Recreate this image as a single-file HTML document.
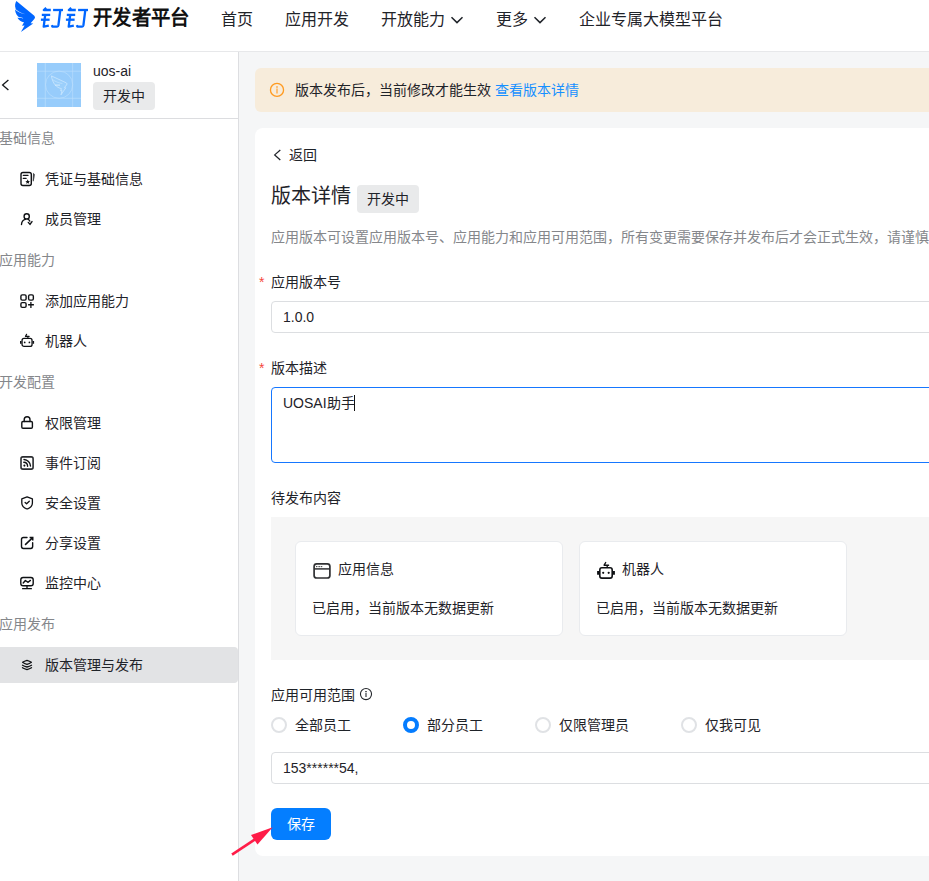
<!DOCTYPE html>
<html lang="zh-CN">
<head>
<meta charset="utf-8">
<title>钉钉开发者平台</title>
<style>
*{box-sizing:border-box;margin:0;padding:0}
html,body{width:929px;height:881px;overflow:hidden;background:#f5f6f7}
body{font-family:"Liberation Sans",sans-serif;font-size:14px;color:#1f2329;position:relative;-webkit-font-smoothing:auto}
.abs{position:absolute}
.t{position:absolute;white-space:nowrap;line-height:20px;height:20px}
/* header */
#hdr{position:absolute;left:0;top:0;width:929px;height:52px;background:#fff;border-bottom:1px solid #e7e8ea}
#hdr .nav{position:absolute;top:9px;font-size:16px;line-height:22px;height:22px;white-space:nowrap;color:#1f2329}
#hdr .brand{position:absolute;left:93.4px;top:4px;font-size:20px;font-weight:bold;line-height:26px;white-space:nowrap;color:#111;transform-origin:0 50%;transform:translateY(0.7px) scale(0.968,1.01)}
/* sidebar */
#side{position:absolute;left:0;top:52px;width:239px;height:829px;background:#fff;border-right:1px solid #dddee1}
#side .sec{position:absolute;left:-1px;font-size:14px;line-height:20px;color:#85878b;white-space:nowrap}
#side .it{position:absolute;left:45px;font-size:14px;line-height:20px;color:#1f2329;white-space:nowrap}
#side .ic{position:absolute;left:19px;width:16px;height:16px}
.tag{position:absolute;background:#e9eaeb;border-radius:4px;font-size:14px;line-height:20px;color:#1f2329;text-align:center;white-space:nowrap}
/* main */
#alert{position:absolute;left:255px;top:68px;width:700px;height:44px;background:#f7ecdb;border-radius:6px}
#panel{position:absolute;left:255px;top:128px;width:700px;height:728px;background:#fff;border-radius:8px}
.inp{position:absolute;left:271px;width:700px;height:32px;border:1px solid #dcdee1;border-radius:4px;background:#fff}
.card{position:absolute;width:268px;height:95px;top:541px;background:#fff;border:1px solid #e9ebee;border-radius:6px}
.radio{position:absolute;top:717px;width:16px;height:16px;border-radius:50%;border:2px solid #e0e2e5;background:#fff}
.radio.on{border:4.5px solid #047cff}
svg{position:absolute;overflow:visible}
</style>
</head>
<body>

<!-- ============ HEADER ============ -->
<div id="hdr">
  <svg id="logo" style="left:0;top:0" width="92" height="40" viewBox="0 0 92 40">
    <path fill="#0066ff" d="M16.4 0.9 L34.3 15.7 Q35.7 17.1 34.5 18.8 L30.6 23.2 L33.2 23.4 L20.9 31.9 L24.6 25.6 L22.0 25.8 L24.0 22.2 C21.2 21.9 18.8 20.6 17.1 17.3 L19.4 17.4 C17.3 16.2 15.3 13.6 15.0 9.5 L15.7 8.6 C14.6 5.9 15.0 3.0 16.4 0.9 Z"/>
    <path fill="#fff" fill-opacity="0.92" d="M14.8 8.5 C18 11.5 22 13.5 25.7 14.35 C22 13.9 18 12.3 14.8 9.6 Z"/>
    <path fill="#fff" fill-opacity="0.9" d="M16.9 16.85 C19.5 16.9 22 17.5 24 18.45 C22 18.0 19.5 17.65 16.9 17.8 Z"/>
    <g fill="none" stroke="#0066ff" stroke-width="2.3" stroke-linejoin="round">
      <path d="M46.2 7.9 L43.8 10.0 L50.8 10.0"/>
      <path d="M41.8 14.9 L50.2 14.9"/>
      <path d="M40.9 19.7 L49.6 19.7"/>
      <path d="M45.2 15 L43.7 26.6 L48.8 25.6"/>
      <path d="M53.1 10 L63.0 10"/>
      <path d="M60.3 10 L58.4 25.4 Q58.2 26.6 57.2 26.6 L52.4 26.6 L51.9 25.2"/>
    </g>
    <g fill="none" stroke="#0066ff" stroke-width="2.3" stroke-linejoin="round" transform="translate(25 0)">
      <path d="M46.2 7.9 L43.8 10.0 L50.8 10.0"/>
      <path d="M41.8 14.9 L50.2 14.9"/>
      <path d="M40.9 19.7 L49.6 19.7"/>
      <path d="M45.2 15 L43.7 26.6 L48.8 25.6"/>
      <path d="M53.1 10 L63.0 10"/>
      <path d="M60.3 10 L58.4 25.4 Q58.2 26.6 57.2 26.6 L52.4 26.6 L51.9 25.2"/>
    </g>
  </svg>
  <div class="brand">开发者平台</div>
  <div class="nav" style="left:221px">首页</div>
  <div class="nav" style="left:285px">应用开发</div>
  <div class="nav" style="left:381px">开放能力</div>
  <div class="nav" style="left:496px">更多</div>
  <div class="nav" style="left:579px">企业专属大模型平台</div>
  <svg style="left:450px;top:14px" width="14" height="12" viewBox="0 0 14 12"><path d="M1.5 3.2 L7 8.6 L12.5 3.2" fill="none" stroke="#1f2329" stroke-width="1.5"/></svg>
  <svg style="left:533px;top:14px" width="14" height="12" viewBox="0 0 14 12"><path d="M1.5 3.2 L7 8.6 L12.5 3.2" fill="none" stroke="#1f2329" stroke-width="1.5"/></svg>
</div>

<!-- ============ SIDEBAR ============ -->
<div id="side">
  <!-- app header: coordinates relative to #side (page y - 52) -->
  <svg style="left:0;top:24px" width="12" height="16" viewBox="0 0 12 16"><path d="M8.4 3.9 L2.6 9 L8.4 14.1" fill="none" stroke="#14171a" stroke-width="1.3"/></svg>
  <svg id="avatar" style="left:37px;top:11px" width="44" height="44" viewBox="0 0 44 44">
    <rect width="44" height="44" fill="#97ccfb"/>
    <g fill="none" stroke="#bfe0fd" stroke-width="0.6">
      <path d="M8.3 0 V44 M35.7 0 V44 M0 8.2 H44 M0 35.3 H44"/>
      <circle cx="22.1" cy="21.7" r="13.6"/>
    </g>
    <path d="M14.4 12.9 L29.4 19.9 Q30.5 20.8 29.6 21.9 L27.4 24.6 L28.8 24.8 L24 31.8 L25 27.6 L23.6 27.8 L24.4 25.6 C19.6 24.8 15.6 20.6 14.4 12.9 Z" fill="#9bcffb" stroke="#cfe8fd" stroke-width="0.75" stroke-linejoin="round"/>
    <path d="M15.6 16.6 C18.5 18.8 22 20 25.4 20.5" fill="none" stroke="#c9e5fd" stroke-width="0.6"/>
    <path d="M18.4 22.1 H22.6" fill="none" stroke="#e4f2fe" stroke-width="0.8" stroke-linecap="round"/>
  </svg>
  <div class="t" style="left:93px;top:9px;font-size:14px">uos-ai</div>
  <div class="tag" style="left:93px;top:30px;width:62px;height:28px;line-height:28px">开发中</div>
  <div class="abs" style="left:0;top:66px;width:238px;height:1px;background:#dcdde0"></div>

  <div class="sec" style="top:76px">基础信息</div>
  <div class="it" style="top:117px">凭证与基础信息</div>
  <div class="it" style="top:157px">成员管理</div>
  <div class="sec" style="top:198px">应用能力</div>
  <div class="it" style="top:239px">添加应用能力</div>
  <div class="it" style="top:279px">机器人</div>
  <div class="sec" style="top:320px">开发配置</div>
  <div class="it" style="top:361px">权限管理</div>
  <div class="it" style="top:401px">事件订阅</div>
  <div class="it" style="top:441px">安全设置</div>
  <div class="it" style="top:481px">分享设置</div>
  <div class="it" style="top:521px">监控中心</div>
  <div class="sec" style="top:562px">应用发布</div>
  <div class="abs" style="left:0;top:595px;width:238px;height:36px;background:#e2e3e5;border-radius:0 4px 4px 0"></div>
  <div class="it" style="top:603px">版本管理与发布</div>
</div>

<!-- ============ MAIN ============ -->
<div id="alert"></div>
<div class="t" style="left:295px;top:80px">版本发布后，当前修改才能生效 <span style="color:#1890ff">查看版本详情</span></div>

<div id="panel"></div>
<div class="t" style="left:289px;top:145px">返回</div>
<div class="t" style="left:271px;top:182px;font-size:20px;line-height:28px;height:28px">版本详情</div>
<div class="tag" style="left:357px;top:185px;width:62px;height:28px;line-height:29px">开发中</div>
<div class="t" style="left:271px;top:227px;color:#85878b">应用版本可设置应用版本号、应用能力和应用可用范围，所有变更需要保存并发布后才会正式生效，请谨慎操作</div>

<div class="t" style="left:259px;top:272px;color:#f5483b">*</div>
<div class="t" style="left:271px;top:272px">应用版本号</div>
<div class="inp" style="top:301px"></div>
<div class="t" style="left:283px;top:307px">1.0.0</div>

<div class="t" style="left:259px;top:358px;color:#f5483b">*</div>
<div class="t" style="left:271px;top:358px">版本描述</div>
<div class="inp" style="top:387px;height:76px;border-color:#1677ff"></div>
<div class="t" style="left:283px;top:393px">UOSAI助手</div>

<div class="t" style="left:271px;top:488px">待发布内容</div>
<div class="abs" style="left:271px;top:517px;width:700px;height:143px;background:#f6f6f6"></div>
<div class="card" style="left:295px"></div>
<div class="card" style="left:579px"></div>
<div class="t" style="left:338px;top:559px">应用信息</div>
<div class="t" style="left:312px;top:598px">已启用，当前版本无数据更新</div>
<div class="t" style="left:622px;top:559px">机器人</div>
<div class="t" style="left:596px;top:598px">已启用，当前版本无数据更新</div>

<div class="t" style="left:271px;top:685px">应用可用范围</div>
<div class="radio" style="left:271px"></div>
<div class="t" style="left:295px;top:715px">全部员工</div>
<div class="radio on" style="left:403px"></div>
<div class="t" style="left:427px;top:715px">部分员工</div>
<div class="radio" style="left:535px"></div>
<div class="t" style="left:559px;top:715px">仅限管理员</div>
<div class="radio" style="left:681px"></div>
<div class="t" style="left:705px;top:715px">仅我可见</div>

<div class="inp" style="top:752px"></div>
<div class="t" style="left:283px;top:758px">153******54,</div>

<div class="abs" style="left:271px;top:808px;width:60px;height:32px;background:#047eff;border-radius:6px;color:#fff;font-size:14px;line-height:32px;text-align:center">保存</div>

<!-- ============ ICON OVERLAY (page coordinates) ============ -->
<svg id="icons" style="left:0;top:0;pointer-events:none" width="929" height="881" viewBox="0 0 929 881">
  
  <g fill="none" stroke="#0f1114" stroke-width="1.4" stroke-linecap="round" stroke-linejoin="round">
    <!-- 1 certificate -->
    <rect x="21" y="172.5" width="10.3" height="13" rx="2"/>
    <path d="M23.3 175.45 H28 M23.3 178.4 H26.1" stroke-width="1.25" stroke-linecap="round"/>
    <path d="M27.7 179.3 L28.4 180.9 L30.1 181 L28.8 182.1 L29.2 183.8 L27.7 182.9 L26.2 183.8 L26.6 182.1 L25.3 181 L27 180.9 Z" fill="#0f1114" stroke="none"/>
    <path d="M33.0 172.8 L34.9 174.4 L33.75 181.2 L32.7 181.2 Z" fill="#47494d" stroke="none"/>
    <!-- 2 member -->
    <circle cx="26.7" cy="216.4" r="2.6"/>
    <path d="M21.5 224.5 C21.6 222 23.2 220 25.4 219.4 M28.1 219.4 C29 219.8 29.6 220.4 29.8 221.1 M28.3 222.4 L30 224.4 L32 221.6"/>
    <!-- 3 add ability -->
    <rect x="20.9" y="294.9" width="5.2" height="5.2" rx="1.3"/>
    <rect x="28.6" y="294.9" width="4.75" height="5.2" rx="1.3"/>
    <rect x="20.9" y="302.6" width="5.2" height="4.75" rx="1.3"/>
    <path d="M30.9 302 V307.9 M28.1 304.75 H33.9" stroke-linecap="butt" stroke-width="1.3"/>
    <!-- 5 lock -->
    <rect x="21.8" y="421.5" width="10.6" height="6.7" rx="1.2"/>
    <path d="M24.2 421.6 V419.7 A2.9 2.9 0 0 1 30 419.7 V421.6"/>
    <!-- 6 rss -->
    <rect x="21" y="456.9" width="12.1" height="12.2" rx="1.8" stroke-width="1.6" stroke="#2a2c30"/>
    <circle cx="24.4" cy="465.6" r="1.05" fill="#0f1114" stroke="none"/>
    <path d="M23.8 462.3 A4 4 0 0 1 27.6 466.2 M24 459.5 A6.9 6.9 0 0 1 30.5 466" stroke-width="1.4" stroke-linecap="round"/>
    <!-- 7 shield -->
    <path d="M27.1 496.9 L32.4 498.8 V503 C32.4 506 30 508 27.1 509 C24.2 508 21.8 506 21.8 503 V498.8 Z" stroke-width="1.3"/>
    <path d="M25.1 502.4 L26.6 503.8 L29.3 501.3" stroke-width="1.3"/>
    <!-- 8 share -->
    <path d="M27 537.55 H23.4 Q21.5 537.55 21.5 539.4 V546.6 Q21.5 548.45 23.4 548.45 H30.8 Q32.65 548.45 32.65 546.6 V542.7"/>
    <path d="M25.1 544.9 L32.4 537.9 M29.6 537.55 H32.75 V540.5" stroke-linecap="butt" stroke-linejoin="miter" stroke-width="1.5"/>
    <!-- 9 monitor -->
    <rect x="20.8" y="577.5" width="12.4" height="8.3" rx="2.3" stroke-width="1.4"/>
    <path d="M27 586 V588.5 M22.6 588.7 H31.4" stroke-width="1.3"/>
    <path d="M23.2 583 L25.4 580.5 L28.1 582.3 L30.4 580.4" stroke-width="1.4"/>
    <!-- 10 layers -->
    <path d="M27 660.3 Q29.6 661 31.4 662.35 Q29.6 663.7 27 664.45 Q24.4 663.7 22.6 662.35 Q24.4 661 27 660.3 Z" stroke-width="1.3"/>
    <path d="M22.5 665.3 Q24.4 666.4 27 667 Q29.6 666.4 31.5 665.3 M22.5 667.7 Q24.4 668.9 27 669.6 Q29.6 668.9 31.5 667.7" stroke-width="1.3"/>
  </g>
  <!-- 4 robot (sidebar) -->
  <g fill="none" stroke="#0f1114" stroke-width="1.3" stroke-linejoin="round" stroke-linecap="round" transform="translate(20 334)">
      <rect x="2.05" y="4.45" width="10" height="8" rx="2"/>
      <path d="M0.75 6.9 V9.8 M13.35 6.9 V9.8" stroke-width="1.5" stroke-linecap="butt"/>
      <circle cx="4.7" cy="8.4" r="0.85" fill="#0f1114" stroke="none"/>
      <circle cx="9.4" cy="8.4" r="0.85" fill="#0f1114" stroke="none"/>
      <path d="M6.6 0.3 L5.5 2.4 H9.1 M7.9 2.4 V4.2" stroke-width="1.2"/>
    </g>
  <!-- robot (card) -->
  <g fill="none" stroke="#0f1114" stroke-width="1.6" stroke-linejoin="round" stroke-linecap="round">
    <rect x="599.8" y="567.8" width="12.4" height="10.3" rx="2.1"/>
    <path d="M598.05 570.9 V574.8 M613.95 570.9 V574.8" stroke-width="1.9" stroke-linecap="butt"/>
    <circle cx="603.2" cy="572.8" r="1.1" fill="#0f1114" stroke="none"/>
    <circle cx="608.7" cy="572.8" r="1.1" fill="#0f1114" stroke="none"/>
    <path d="M605.7 562.5 L604.1 565.2 H608.6 M607.2 565.2 V567.4" stroke-width="1.35"/>
  </g>
  <!-- app info (card) -->
  <g fill="none" stroke="#303133" stroke-width="1.7">
    <rect x="314.1" y="563.8" width="15.8" height="14.2" rx="2.6"/>
    <path d="M314.1 568.9 H329.9" stroke-width="1.5"/>
    <path d="M316.4 566.6 H321.8" stroke-width="0.5" stroke-opacity="0.6"/>
    <g fill="#303133" stroke="none"><circle cx="316.6" cy="566.6" r="0.65"/><circle cx="319.2" cy="566.6" r="0.65"/><circle cx="321.7" cy="566.6" r="0.65"/></g>
  </g>
  <!-- alert icon -->
  <circle cx="277" cy="89.9" r="6.55" fill="none" stroke="#ff9a1f" stroke-width="1.3"/>
  <path d="M277 86.2 V87.7" stroke="#ffa53a" stroke-width="1.6"/>
  <path d="M277 88.6 V93.4" stroke="#ffb35a" stroke-width="1.6"/>
  <!-- back chevron -->
  <path d="M280.3 150 L274.7 154.9 L280.3 160" fill="none" stroke="#1f2329" stroke-width="1.25"/>
  <!-- info icon -->
  <circle cx="366" cy="694.1" r="5.55" fill="none" stroke="#23262b" stroke-width="1.1"/>
  <path d="M366 691.1 V692.3" stroke="#3a3d42" stroke-width="1.6"/>
  <path d="M366 692.9 V696.9" stroke="#6a6d72" stroke-width="1.6"/>
  <!-- text cursor -->
  <rect x="354" y="395" width="1" height="16" fill="#111"/>
  <!-- annotation arrow -->
  <path d="M232.0 854.7 L255 839.4" stroke="#ff1c48" stroke-width="2.6" fill="none"/>
  <path d="M272.7 827.3 L251.0 835.1 L257.5 844.6 Z" fill="#ff1c48"/>
</svg>

</body>
</html>
